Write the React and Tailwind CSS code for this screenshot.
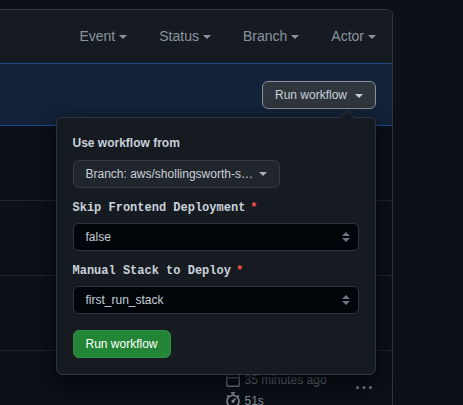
const Caret = ({ className = "" }) => (
  <span className={`inline-block h-0 w-0 border-x-4 border-t-4 border-x-transparent border-t-current ${className}`} />
);

const Filter = ({ label }) => (
  <div className="flex items-center gap-1 text-sm leading-[21px] text-[#8b949e]">
    <span>{label}</span>
    <Caret />
  </div>
);

const Calendar = () => (
  <svg width="16" height="16" viewBox="0 0 16 16" fill="currentColor">
    <path d="M4.75 0a.75.75 0 0 1 .75.75V2h5V.75a.75.75 0 0 1 1.5 0V2h1.25c.966 0 1.75.784 1.75 1.75v10.5A1.75 1.75 0 0 1 13.25 16H2.75A1.75 1.75 0 0 1 1 14.25V3.75C1 2.784 1.784 2 2.75 2H4V.75A.75.75 0 0 1 4.75 0ZM2.5 7.5v6.75c0 .138.112.25.25.25h10.5a.25.25 0 0 0 .25-.25V7.5Zm10.75-4H2.75a.25.25 0 0 0-.25.25V6h11V3.75a.25.25 0 0 0-.25-.25Z" />
  </svg>
);

const Stopwatch = () => (
  <svg width="16" height="16" viewBox="0 0 16 16" fill="currentColor">
    <path d="M5.75.75A.75.75 0 0 1 6.5 0h3a.75.75 0 0 1 0 1.5h-.75v1l-.001.041a6.724 6.724 0 0 1 3.464 1.435l.007-.006.75-.75a.749.749 0 0 1 1.275.326.749.749 0 0 1-.215.734l-.75.75-.006.007a6.75 6.75 0 1 1-10.548 0L2.72 5.03l-.75-.75a.751.751 0 0 1 .018-1.042.751.751 0 0 1 1.042-.018l.75.75.007.006A6.72 6.72 0 0 1 7.25 2.541V1.5H6.5a.75.75 0 0 1-.75-.75ZM8 14.5a5.25 5.25 0 1 0-.001-10.501A5.25 5.25 0 0 0 8 14.5Zm.389-6.7 1.33-1.33a.75.75 0 1 1 1.061 1.06L9.45 8.861A1.503 1.503 0 0 1 8 10.75a1.499 1.499 0 1 1 .389-2.95Z" />
  </svg>
);

const Kebab = () => (
  <svg width="16" height="16" viewBox="0 0 16 16" fill="currentColor">
    <circle cx="1.5" cy="7.5" r="1.5" />
    <circle cx="8" cy="7.5" r="1.5" />
    <circle cx="14.5" cy="7.5" r="1.5" />
  </svg>
);

const Field = ({ label, value }) => (
  <div className="flex flex-col">
    <div className="-ml-[0.5px] flex h-[35px] items-center gap-[5px] pt-[5px] font-['Liberation_Mono',monospace] text-xs font-bold text-[#c9d1d9]">
      <span>{label}</span>
      <span className="text-[#f85149]">*</span>
    </div>
    <div className="flex h-7 items-center justify-between rounded-md border border-[#30363d] bg-[#010409] pr-2 pl-[11.5px] text-xs text-[#c9d1d9]">
      <span>{value}</span>
      <svg width="8" height="10" viewBox="0 0 8 10" fill="#6e7681">
        <path d="M4 0 8 4H0zM4 10 0 6h8z" />
      </svg>
    </div>
  </div>
);

const Popup = () => (
  <div className="absolute top-[117px] left-[56px] flex h-[258px] w-[320px] flex-col rounded-md border border-[#30363d] bg-[#161b22] px-4 pt-4 shadow-[0_8px_24px_#010409]">
    <svg className="absolute -top-[8px] right-[20px]" width="16" height="9" viewBox="0 0 16 9">
      <path d="M0 9 8 1l8 8z" fill="#161b22" />
      <path d="M0.5 7.5 8 .5l7.5 7" fill="none" stroke="#30363d" />
    </svg>
    <div className="-ml-[0.5px] text-xs leading-[18px] font-bold text-[#c9d1d9]">Use workflow from</div>
    <div className="mt-2 flex h-7 w-[207px] items-center gap-[6.5px] rounded-md border border-[#363b42] bg-[#21262d] pl-[11.5px] text-xs text-[#c9d1d9]">
      <span>Branch: aws/shollingsworth-s…</span>
      <Caret className="opacity-80" />
    </div>
    <Field label="Skip Frontend Deployment" value="false" />
    <Field label="Manual Stack to Deploy" value="first_run_stack" />
    <div className="mt-4 flex h-7 w-[98px] items-center rounded-md border border-[#2f9142] bg-[#238636] pl-[11.5px] text-xs text-white">
      Run workflow
    </div>
  </div>
);

export default function App() {
  return (
    <div className="relative h-[405px] w-[463px] overflow-hidden bg-[#0d1117] pt-[9px] font-['Liberation_Sans',Arial,sans-serif]">
      <div className="h-[500px] w-[393px] overflow-hidden rounded-tr-md border-t border-r border-[#30363d]">
        <div className="flex h-[53px] items-center justify-end gap-8 bg-[#161b22] pr-4">
          <Filter label="Event" />
          <Filter label="Status" />
          <Filter label="Branch" />
          <Filter label="Actor" />
        </div>
        <div className="flex h-[63px] items-start justify-end border-y border-[#1f4a87] bg-[#13233a] pt-[17px] pr-4">
          <div className="flex h-7 w-[114px] items-center gap-2 rounded-md border border-[#8b949e] bg-[#30363d] pl-3 text-xs text-[#c9d1d9]">
            <span>Run workflow</span>
            <Caret className="mt-0.5" />
          </div>
        </div>
        <div className="h-[75px] border-b border-[#21262d]" />
        <div className="h-[75px] border-b border-[#21262d]" />
        <div className="h-[75px] border-b border-[#21262d]" />
        <div className="flex items-start justify-between pt-5 pr-5 pl-[225px] text-xs leading-4 text-[#8b949e]">
          <div className="flex flex-col gap-1">
            <div className="flex gap-[3.5px]">
              <Calendar />
              <span className="pt-px">35 minutes ago</span>
            </div>
            <div className="flex gap-[3.5px]">
              <Stopwatch />
              <span className="pt-px">51s</span>
            </div>
          </div>
          <div className="pt-[9px]">
            <Kebab />
          </div>
        </div>
      </div>
      <Popup />
    </div>
  );
}
